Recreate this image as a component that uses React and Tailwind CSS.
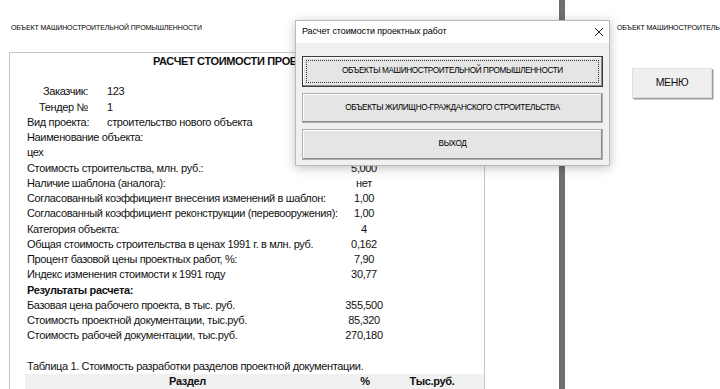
import React from "react";

const F = { fontFamily: '"Liberation Sans", Arial, sans-serif' };

function Row({ label, value, bold, children }) {
  return (
    <div className="flex h-[15.25px] items-center">
      <div className={`w-[314px] pl-[17px] whitespace-nowrap ${bold ? "font-bold" : ""}`}>{label}</div>
      <div className="w-[80px] text-center">{value}</div>
      {children}
    </div>
  );
}

function WinButton({ children, focused, className = "" }) {
  return (
    <div
      className={`relative flex items-center justify-center bg-[#e5e5e5] border ${
        focused ? "border-[#3a3a3a]" : "border-[#adadad]"
      } shadow-[inset_-1px_-1px_0_#8a8a8a,inset_1px_1px_0_#ffffff] ${className}`}
    >
      {focused && (
        <div className="absolute inset-[3px] border border-dotted border-[#333]" />
      )}
      <span className="text-[8.2px] tracking-[-0.35px] text-black">{children}</span>
    </div>
  );
}

export default function App() {
  return (
    <div className="relative w-[720px] h-[389px] overflow-hidden bg-white text-[#111]" style={F}>
      <div className="flex h-full">
        {/* left sheet */}
        <div className="w-[559px] shrink-0 h-full flex flex-col">
          <div className="h-[52px] pl-[11px] pt-[23px] text-[7px] tracking-[-0.1px] whitespace-nowrap text-black">
            ОБЪЕКТ МАШИНОСТРОИТЕЛЬНОЙ ПРОМЫШЛЕННОСТИ
          </div>
          <div className="ml-[9px] w-[476px] flex-1 border-l border-t border-r border-[#c6c6c6] text-[11px] tracking-[-0.35px] pt-[1px]">
            <div className="h-[15.25px] flex items-center pl-[143px] font-bold text-[11px] whitespace-nowrap">
              РАСЧЕТ СТОИМОСТИ ПРОЕКТНЫХ РАБОТ
            </div>
            <div className="h-[15.25px]" />
            <div className="flex h-[15.25px] items-center">
              <div className="w-[78px] text-right">Заказчик:</div>
              <div className="pl-[19px]">123</div>
            </div>
            <div className="flex h-[15.25px] items-center">
              <div className="w-[78px] text-right">Тендер №</div>
              <div className="pl-[19px]">1</div>
            </div>
            <div className="flex h-[15.25px] items-center">
              <div className="w-[97px] pl-[17px]">Вид проекта:</div>
              <div>строительство нового объекта</div>
            </div>
            <Row label="Наименование объекта:" />
            <Row label="цех" />
            <Row label="Стоимость строительства, млн. руб.:" value="5,000" />
            <Row label="Наличие шаблона (аналога):" value="нет" />
            <Row label="Согласованный коэффициент внесения изменений в шаблон:" value="1,00" />
            <Row label="Согласованный коэффициент реконструкции (перевооружения):" value="1,00" />
            <Row label="Категория объекта:" value="4" />
            <Row label="Общая стоимость строительства в ценах 1991 г. в млн. руб." value="0,162" />
            <Row label="Процент базовой цены проектных работ, %:" value="7,90" />
            <Row label="Индекс изменения стоимости к 1991 году" value="30,77" />
            <Row label="Результаты расчета:" bold />
            <Row label="Базовая цена рабочего проекта, в тыс. руб." value="355,500" />
            <Row label="Стоимость проектной документации, тыс.руб." value="85,320" />
            <Row label="Стоимость рабочей документации, тыс.руб." value="270,180" />
            <div className="h-[15.25px]" />
            <Row label="Таблица 1. Стоимость разработки разделов проектной документации." />
            <div className="ml-[15px] h-[15.25px] flex items-center bg-[#f0f0f0] font-bold">
              <div className="w-[325px] text-center">Раздел</div>
              <div className="w-[30px] text-center">%</div>
              <div className="flex-1 text-center">Тыс.руб.</div>
            </div>
          </div>
        </div>
        {/* separator */}
        <div className="w-[6px] shrink-0 h-full bg-[#6f6f6f]" />
        {/* right sheet */}
        <div className="flex-1 min-w-0 overflow-hidden h-full flex flex-col">
          <div className="h-[41px] pl-[52px] pt-[23px] text-[7px] tracking-[-0.1px] whitespace-nowrap text-black">
            ОБЪЕКТ МАШИНОСТРОИТЕЛЬНОЙ ПРОМЫШЛЕННОСТИ
          </div>
          <div className="ml-[67px] mt-[27px] w-[80px] h-[30px] flex items-center justify-center bg-[#efefef] border border-[#e0e0e0] shadow-[1px_1px_0_#9a9a9a,2px_2px_0_#d0d0d0]">
            <span className="text-[10.5px] tracking-[-0.3px] text-[#111]">МЕНЮ</span>
          </div>
        </div>
      </div>

      {/* dialog */}
      <div className="absolute left-[295px] top-[20px] w-[315px] h-[146px] bg-[#f0f0f0] border border-[#b9b9b9] shadow-[0_2px_10px_rgba(0,0,0,0.25)] flex flex-col">
        <div className="h-[22px] bg-white flex items-center justify-between pl-[6px] pr-[3px]">
          <span className="text-[9px] tracking-[-0.1px] text-black">Расчет стоимости проектных работ</span>
          <svg width="10" height="10" viewBox="0 0 10 10" className="mr-[2px]">
            <path d="M1 1L9 9M9 1L1 9" stroke="#222" strokeWidth="1" />
          </svg>
        </div>
        <div className="flex flex-col gap-[6px] px-[6px] pt-[13px]">
          <WinButton focused className="h-[31px]">ОБЪЕКТЫ МАШИНОСТРОИТЕЛЬНОЙ ПРОМЫШЛЕННОСТИ</WinButton>
          <WinButton className="h-[30px]">ОБЪЕКТЫ ЖИЛИЩНО-ГРАЖДАНСКОГО СТРОИТЕЛЬСТВА</WinButton>
          <WinButton className="h-[31px]">ВЫХОД</WinButton>
        </div>
      </div>
    </div>
  );
}
